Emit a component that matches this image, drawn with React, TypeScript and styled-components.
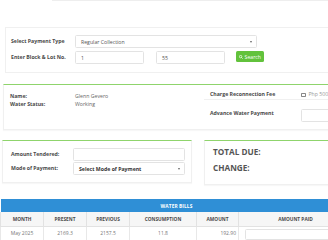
import React from "react";
import styled, { createGlobalStyle } from "styled-components";

const Global = createGlobalStyle`
  html, body { margin: 0; padding: 0; background: #fff; overflow: hidden; }
  body { font-family: "Open Sans", "Liberation Sans", sans-serif; color: #555; }
  * { box-sizing: border-box; }
`;

const Page = styled.div`
  width: 380px;
  position: relative;
`;

const TopEdge = styled.div`
  margin-left: 52px;
  height: 1px;
  border-bottom: 1px solid #eeeeee;
`;

const FormPanel = styled.div`
  margin: 26px 0 0 5px;
  border: 1px solid #f0f0f0;
  padding: 7px 5px 7px 5px;
  display: flex;
  flex-direction: column;
  gap: 3px;
  height: 46px;
`;

const FormRow = styled.div`
  display: flex;
  align-items: flex-start;
`;

const Label = styled.div<{ $w: number }>`
  width: ${(p) => p.$w}px;
  flex: none;
  font-size: 5.2px;
  font-weight: 700;
  color: #4a4a4a;
  line-height: 13px;
`;

const Field = styled.div<{ $w: number; $h?: number; $bold?: boolean }>`
  width: ${(p) => p.$w}px;
  height: ${(p) => p.$h ?? 13}px;
  flex: none;
  border: 1px solid #e3e3e3;
  border-radius: 1.5px;
  background: #fff;
  font-size: 5.2px;
  font-weight: ${(p) => (p.$bold ? 700 : 400)};
  color: ${(p) => (p.$bold ? "#333" : "#555")};
  padding: 0 5px;
  display: flex;
  align-items: center;
  position: relative;
`;

const Caret = styled.span`
  position: absolute;
  right: 4px;
  top: 50%;
  margin-top: -1px;
  width: 0;
  height: 0;
  border-left: 1.3px solid transparent;
  border-right: 1.3px solid transparent;
  border-top: 2px solid #666;
`;

const SearchBtn = styled.div`
  margin-left: 11px;
  width: 28px;
  height: 11px;
  background: #62c23c;
  border-radius: 1.5px;
  color: #fff;
  font-size: 5.2px;
  display: flex;
  align-items: center;
  justify-content: center;
  gap: 1.5px;
`;

const InfoPanel = styled.div`
  margin: 11px 0 0 3px;
  border: 1px solid #f0f0f0;
  border-top: 1px solid #8fd46c;
  height: 46px;
  display: flex;
  box-shadow: 0 1px 1px rgba(0, 0, 0, 0.03);
`;

const InfoLeft = styled.div`
  width: 200px;
  padding: 7px 0 0 6px;
  display: flex;
  flex-direction: column;
`;

const InfoRow = styled.div`
  display: flex;
  font-size: 5.2px;
  line-height: 8px;
`;

const InfoKey = styled.div`
  width: 65px;
  font-weight: 700;
  color: #4a4a4a;
`;

const InfoVal = styled.div`
  color: #666;
`;

const InfoRight = styled.div`
  flex: 1;
  display: flex;
  flex-direction: column;
`;

const FeeRow = styled.div<{ $line?: boolean }>`
  display: flex;
  align-items: ${(p) => (p.$line ? "flex-end" : "center")};
  padding-left: 6px;
  padding-bottom: ${(p) => (p.$line ? 1 : 0)}px;
  height: ${(p) => (p.$line ? 15 : 26)}px;
  border-bottom: ${(p) => (p.$line ? "1px solid #f0f0f0" : "none")};
`;

const FeeLabel = styled.div`
  width: 91px;
  font-size: 5.2px;
  font-weight: 700;
  color: #4a4a4a;
  line-height: 7px;
`;

const Check = styled.span`
  width: 4.5px;
  height: 4.5px;
  border: 0.8px solid #888;
  border-radius: 0.8px;
  margin-right: 3px;
  margin-bottom: 1px;
`;

const Php = styled.span`
  font-size: 5.2px;
  color: #999;
  line-height: 7px;
`;

const AdvInput = styled.div`
  width: 60px;
  height: 13px;
  border: 1px solid #e3e3e3;
  border-radius: 1.5px;
  margin-top: 4px;
`;

const CardsRow = styled.div`
  display: flex;
  gap: 12px;
  margin: 10px 0 0 2px;
  align-items: flex-start;
`;

const Card = styled.div<{ $w: number; $h: number }>`
  width: ${(p) => p.$w}px;
  height: ${(p) => p.$h}px;
  flex: none;
  border: 1px solid #f0f0f0;
  border-top: 1px solid #8fd46c;
  box-shadow: 0 1px 1px rgba(0, 0, 0, 0.03);
`;

const PayForm = styled.div`
  padding: 7px 0 0 8px;
  display: flex;
  flex-direction: column;
  gap: 1px;
`;

const Totals = styled.div`
  padding: 5px 0 0 8px;
  display: flex;
  flex-direction: column;
  gap: 5px;
`;

const TotalLine = styled.div`
  font-size: 8.2px;
  font-weight: 700;
  color: #555;
  line-height: 11px;
`;

const Table = styled.table`
  margin-top: 14px;
  border-collapse: collapse;
  table-layout: fixed;
  width: 352px;
  font-size: 4.8px;
`;

const Banner = styled.th`
  background: #2f8fd6;
  color: #fff;
  height: 13px;
  font-weight: 700;
  letter-spacing: 0.1px;
  padding: 0;
`;

const HeadCell = styled.th`
  background: #f6f6f6;
  height: 14px;
  border: 1px solid #e2e2e2;
  border-top: none;
  color: #4a4a4a;
  font-weight: 700;
  padding: 0;
  text-align: center;
`;

const Cell = styled.td<{ $right?: boolean }>`
  height: 14px;
  border: 1px solid #e8e8e8;
  color: #777;
  padding: 0 2px;
  text-align: ${(p) => (p.$right ? "right" : "center")};
  font-size: 5px;
`;

const PaidInput = styled.div`
  margin-left: 4px;
  height: 11px;
  border: 1px solid #e3e3e3;
  border-radius: 1.5px;
  margin-top: 2px;
`;

export default function App() {
  const cols = [43, 43, 43, 67, 42, 114];
  return (
    <Page>
      <Global />
      <TopEdge />
      <FormPanel>
        <FormRow>
          <Label $w={64}>Select Payment Type</Label>
          <Field $w={182}>
            Regular Collection
            <Caret />
          </Field>
        </FormRow>
        <FormRow>
          <Label $w={64}>Enter Block &amp; Lot No.</Label>
          <Field $w={69}>1</Field>
          <Field $w={69} style={{ marginLeft: 12 }}>55</Field>
          <SearchBtn>
            <svg width="4" height="4" viewBox="0 0 10 10">
              <circle cx="4" cy="4" r="3" fill="none" stroke="#fff" strokeWidth="1.8" />
              <line x1="6.2" y1="6.2" x2="9" y2="9" stroke="#fff" strokeWidth="2" />
            </svg>
            Search
          </SearchBtn>
        </FormRow>
      </FormPanel>

      <InfoPanel>
        <InfoLeft>
          <InfoRow>
            <InfoKey>Name:</InfoKey>
            <InfoVal>Glenn Gevero</InfoVal>
          </InfoRow>
          <InfoRow>
            <InfoKey>Water Status:</InfoKey>
            <InfoVal>Working</InfoVal>
          </InfoRow>
        </InfoLeft>
        <InfoRight>
          <FeeRow $line>
            <FeeLabel>Charge Reconnection Fee</FeeLabel>
            <Check />
            <Php>Php 500</Php>
          </FeeRow>
          <FeeRow>
            <FeeLabel>Advance Water Payment</FeeLabel>
            <AdvInput />
          </FeeRow>
        </InfoRight>
      </InfoPanel>

      <CardsRow>
        <Card $w={190} $h={43}>
          <PayForm>
            <FormRow>
              <Label $w={62}>Amount Tendered:</Label>
              <Field $w={112} />
            </FormRow>
            <FormRow>
              <Label $w={62}>Mode of Payment:</Label>
              <Field $w={112} $bold>
                Select Mode of Payment
                <Caret />
              </Field>
            </FormRow>
          </PayForm>
        </Card>
        <Card $w={160} $h={45}>
          <Totals>
            <TotalLine>TOTAL DUE:</TotalLine>
            <TotalLine>CHANGE:</TotalLine>
          </Totals>
        </Card>
      </CardsRow>

      <Table>
        <colgroup>
          {cols.map((w, i) => (
            <col key={i} style={{ width: w }} />
          ))}
        </colgroup>
        <thead>
          <tr>
            <Banner colSpan={6}>WATER BILLS</Banner>
          </tr>
          <tr>
            <HeadCell>MONTH</HeadCell>
            <HeadCell>PRESENT</HeadCell>
            <HeadCell>PREVIOUS</HeadCell>
            <HeadCell>CONSUMPTION</HeadCell>
            <HeadCell>AMOUNT</HeadCell>
            <HeadCell>AMOUNT PAID</HeadCell>
          </tr>
        </thead>
        <tbody>
          <tr>
            <Cell>May 2025</Cell>
            <Cell>2169.3</Cell>
            <Cell>2157.5</Cell>
            <Cell>11.8</Cell>
            <Cell $right>192.90</Cell>
            <Cell>
              <PaidInput />
            </Cell>
          </tr>
        </tbody>
      </Table>
    </Page>
  );
}
